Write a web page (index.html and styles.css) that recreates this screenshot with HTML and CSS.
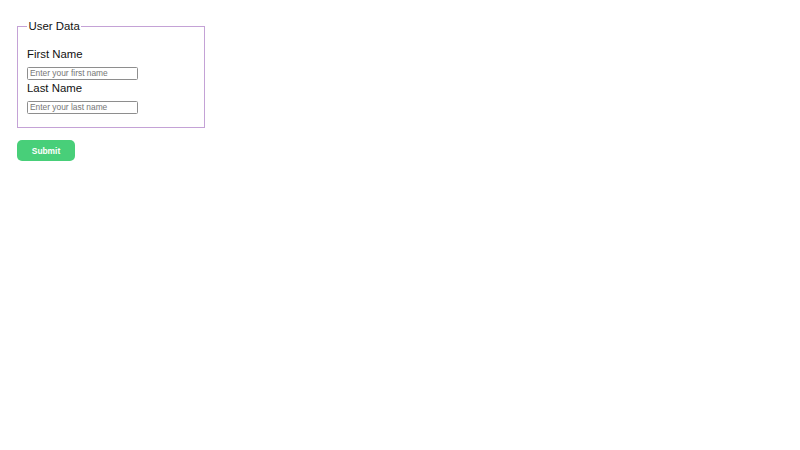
FILE: index.html
```html
<!DOCTYPE html>
<html lang="en">
<head>
<meta charset="utf-8">
<title>User Data</title>
<link rel="stylesheet" href="styles.css">
</head>
<body>
<main class="page">
  <form class="form">
    <fieldset class="group">
      <legend class="group-title">User Data</legend>
      <div class="field">
        <label class="field-label" for="first">First Name</label>
        <input class="field-input" id="first" type="text" placeholder="Enter your first name">
      </div>
      <div class="field">
        <label class="field-label" for="last">Last Name</label>
        <input class="field-input" id="last" type="text" placeholder="Enter your last name">
      </div>
    </fieldset>
    <button class="submit" type="submit">Submit</button>
  </form>
</main>
</body>
</html>
```

FILE: styles.css
```css
html, body {
  margin: 0;
  padding: 0;
  background: #ffffff;
}

body {
  font-family: "Liberation Sans", Arial, sans-serif;
  color: #111111;
}

.page {
  padding: 19.5px 0 0 17px;
}

.form {
  display: flex;
  flex-direction: column;
  align-items: flex-start;
}

.group {
  box-sizing: border-box;
  width: 188px;
  margin: 0;
  padding: 15.5px 9px 13px 9px;
  border: 1px solid #c4a2d6;
  display: flex;
  flex-direction: column;
  gap: 2.5px;
}

.group-title {
  font-size: 11.4px;
  line-height: 13px;
  padding: 0 1.5px;
  color: #111111;
}

.field {
  display: flex;
  flex-direction: column;
  align-items: flex-start;
}

.field-label {
  font-size: 11.4px;
  line-height: 13px;
  margin-bottom: 5.5px;
}

.field-input {
  box-sizing: border-box;
  width: 111px;
  height: 13px;
  margin: 0;
  padding: 0 2px;
  border: 1px solid #8e8e8e;
  border-radius: 1.5px;
  font-family: "Liberation Sans", Arial, sans-serif;
  font-size: 8.4px;
  line-height: 11px;
  color: #111111;
  background: #ffffff;
}

.field-input::placeholder {
  color: #767676;
}

.submit {
  margin-top: 12.5px;
  width: 58px;
  height: 21px;
  padding: 0;
  border: none;
  border-radius: 5px;
  background: #48cf79;
  color: #ffffff;
  font-family: "Liberation Sans", Arial, sans-serif;
  font-size: 8.4px;
  font-weight: bold;
  cursor: pointer;
}
```
